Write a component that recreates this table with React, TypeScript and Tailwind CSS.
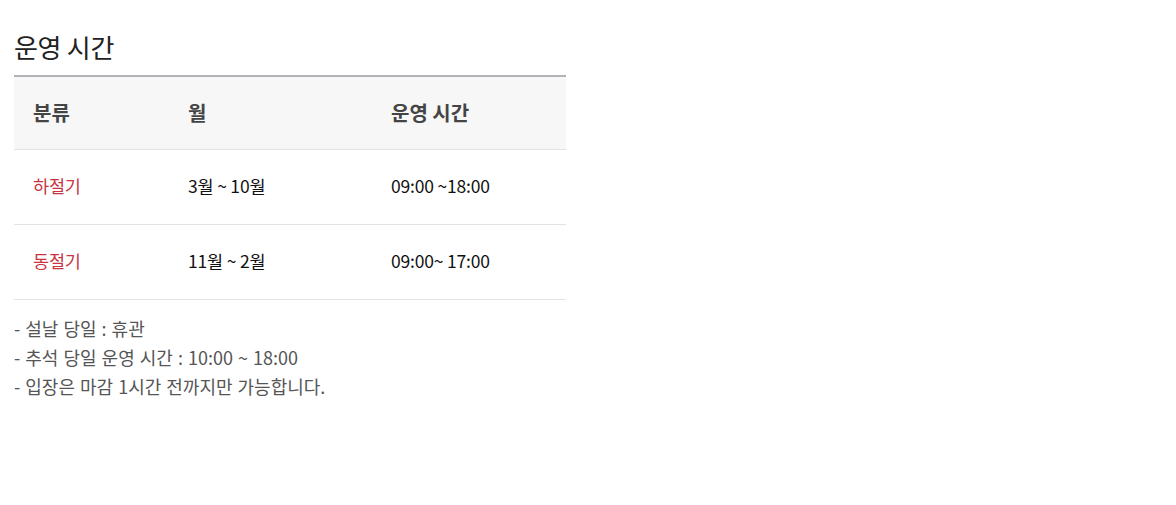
import React from 'react';

const rows = [
  { type: '하절기', month: '3월 ~ 10월', time: '09:00 ~18:00' },
  { type: '동절기', month: '11월 ~ 2월', time: '09:00~ 17:00' },
];

const notes = ['- 설날 당일 : 휴관', '- 추석 당일 운영 시간 : 10:00 ~ 18:00', '- 입장은 마감 1시간 전까지만 가능합니다.'];

export default function App() {
  return (
    <div className="min-h-[505px] bg-white px-[14px] pt-[28px] font-['Noto_Sans_CJK_KR','Noto_Sans',sans-serif]">
      <h2 className="text-[26px] leading-[38px] text-[#222] tracking-[-0.3px]">운영 시간</h2>
      <table className="mt-[9px] w-[552px] table-fixed border-collapse border-t-2 border-[#b3b1b6]">
        <colgroup>
          <col className="w-[155px]" />
          <col className="w-[203px]" />
          <col className="w-[194px]" />
        </colgroup>
        <thead>
          <tr className="h-[73px] bg-[#f7f7f7] border-b border-[#e2e2e2] text-left text-[20px] text-[#444]">
            <th className="pl-[19px] font-bold">분류</th>
            <th className="pl-[19px] font-bold">월</th>
            <th className="pl-[19px] font-bold">운영 시간</th>
          </tr>
        </thead>
        <tbody>
          {rows.map((r) => (
            <tr key={r.type} className="h-[75px] border-b border-[#e2e2e2] text-[17.5px] tracking-[-0.2px]">
              <td className="pl-[19px] text-[#c8343f]">{r.type}</td>
              <td className="pl-[19px] text-[#111]">{r.month}</td>
              <td className="pl-[19px] text-[#111]">{r.time}</td>
            </tr>
          ))}
        </tbody>
      </table>
      <div className="mt-[14px] text-[18px] leading-[29px] text-[#555] [word-spacing:1px]">
        {notes.map((n) => (
          <p key={n}>{n}</p>
        ))}
      </div>
    </div>
  );
}
